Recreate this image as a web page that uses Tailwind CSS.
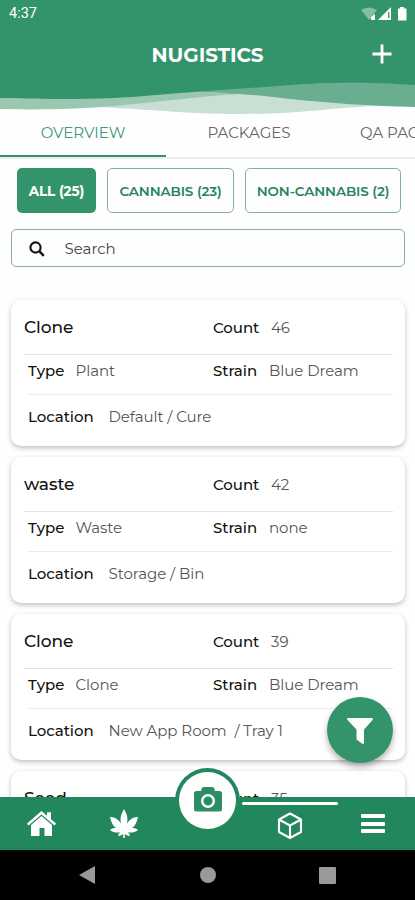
<!DOCTYPE html>
<html lang="en">
<head>
<meta charset="utf-8">
<meta name="viewport" content="width=device-width, initial-scale=1">
<title>Nugistics</title>
<script src="https://cdn.jsdelivr.net/npm/@tailwindcss/browser@4"></script>
</head>
<body class="bg-white">
<div class="relative flex h-[900px] w-[415px] flex-col overflow-hidden bg-[#fefefe] font-['Montserrat','Inter',sans-serif] text-[#111]">

  <header class="relative h-[116px] shrink-0">
    <svg class="absolute inset-0" width="415" height="116" viewBox="0 0 415 116">
      <path fill="#c9dfd4" d="M0 90H415V105C370 105 345 108 310 111C270 115 210 115 165 111C135 109 112 108 102 107C70 108 40 110 0 109Z"/>
      <path fill="#9bc6b0" d="M0 90L240 86V94C190 97 150 103 102 107C70 109 40 110 0 109Z"/>
      <path fill="#69ae90" d="M200 92L260 80H415V107C370 106 330 103 290 99C265 96 245 94 230 93.500C218 92 210 92 200 92Z"/>
      <path fill="#33946c" d="M0 0H415V85C360 81.500 325 82.500 290 85C240 89 190 92 150 95.500C110 99 80 99 60 99C35 99 20 98 0 98Z"/>
    </svg>
    <div class="relative flex h-7 items-center justify-between pr-[7px] pl-[9px] text-white">
      <span class="font-[Roboto] text-[14.5px] leading-none">4:37</span>
      <div class="flex items-start">
        <svg width="50" height="16" viewBox="0 0 50 16">
          <path fill="#83bda4" d="M3 4Q11-1 19 4L11 14Z"/>
          <path fill="#fff" d="M13 11L17 8V14H13Z"/>
          <path fill="#fff" d="M20 14L33 1V14Z"/>
          <path stroke="#33946c" stroke-width="1.3" d="M30.7 6V12"/>
          <path fill="#fff" d="M40 2.5H42V1H46V2.5H48.5V14.5H40Z"/>
        </svg>
      </div>
    </div>
    <div class="relative grid h-[53px] grid-cols-[60px_1fr_60px] items-center text-white">
      <h1 class="col-start-2 text-center text-[20px] font-bold tracking-[-0.05px] whitespace-nowrap">NUGISTICS</h1>
      <svg class="-mt-px ml-[17px]" width="20" height="20" viewBox="0 0 20 20" stroke="#fff" stroke-width="2.8"><path d="M.5 10H19.5M10 .5V19.5"/></svg>
    </div>
  </header>

  <nav class="flex h-[43px] w-[498px] shrink-0 border-b-2 border-[#ececec] text-[15px] text-[#666]">
    <div class="flex w-[166px] items-center justify-center border-b-2 border-[#33946c] pb-1 text-[#43977a]">OVERVIEW</div>
    <div class="flex w-[166px] items-center justify-center pb-1.5">PACKAGES</div>
    <div class="flex w-[166px] items-center pb-1.5 pl-[28px]">QA PACKAGES</div>
  </nav>

  <div class="mt-[9px] ml-[17px] flex h-[45px] shrink-0 gap-[11px] text-[13.5px] font-semibold whitespace-nowrap text-[#25845c]">
    <button class="w-[79px] rounded-[5px] bg-[#33946c] pt-0.5 font-bold tracking-[-0.1px] text-white">ALL (25)</button>
    <button class="w-[127px] rounded-[5px] border border-[#83b39f] pt-0.5 tracking-[-0.1px]">CANNABIS (23)</button>
    <button class="w-[156px] rounded-[5px] border border-[#83b39f] pt-0.5 tracking-[-0.1px]">NON-CANNABIS (2)</button>
  </div>

  <div class="mt-4 ml-[11px] flex h-[38px] w-[394px] shrink-0 items-center rounded-[5px] border border-[#83b39f] pl-[17px]">
    <svg class="mt-0.5" width="16" height="16" viewBox="0 0 16 16" fill="none" stroke="#111" stroke-width="2.1"><circle cx="6.5" cy="6.5" r="5.1"/><path stroke-width="2.4" d="M10.2 10.2L14.8 14.8"/></svg>
    <span class="mt-0.5 ml-[19.5px] text-[15px] text-[#444]">Search</span>
  </div>

  <main id="list" class="mt-[33px] flex min-h-0 flex-1 flex-col gap-[11px] pl-[11px]"></main>

  <footer class="absolute inset-x-0 bottom-0">
    <button class="absolute -top-[100px] left-[327px] flex size-[66px] items-center justify-center rounded-full bg-[#33946c] shadow-[0_4px_6px_rgba(0,0,0,0.3)]">
      <svg class="mt-0.5" width="28" height="28" viewBox="0 0 28 28" fill="#fff"><path d="M1.5 1H26.5Q27.5 1.5 26.5 3L18 12.5V26Q17.5 27.5 16 26.5L10.5 22.5V12.5L1.500 3Q.5 1.500 1.500 1Z"/></svg>
    </button>
    <div class="absolute -top-[29px] left-[175px] size-[65px] rounded-full bg-[#23875e]"></div>
    <div class="relative flex h-[53px] bg-[#23875e]">
      <div class="flex w-[82px] justify-center pt-[14px]">
        <svg width="29" height="26" viewBox="0 0 29 26" fill="#fff"><path d="M14.500 0L20 4.700V1.200H24V8.200L29 12.500L27.500 14.500L14.500 3.400L1.500 14.500L0 12.500Z"/><path d="M14.500 5L25 14V25H17.500V17H12.500V25H4V14Z"/></svg>
      </div>
      <div class="flex w-[83px] justify-center pt-[12px]">
        <svg width="30" height="30" viewBox="0 0 30 30" fill="#fff"><path d="M15 0C18.500 6 19 10 18 14.500C21 10 24.500 8 29 8C28 13 26 17 23 19C26 18.800 27.500 19.500 29 21C25 24 21 24 18.500 23C20 24 20.500 25.500 21 27C18.500 27 16.500 26 15.800 24.500V29H14.200V24.500C13.500 26 11.500 27 9 27C9.500 25.500 10 24 11.500 23C9 24 5 24 1 21C2.500 19.500 4 18.800 7 19C4 17 2 13 1 8C5.500 8 9 10 12 14.500C11 10 11.500 6 15 0Z"/></svg>
      </div>
      <div class="w-[83px]"></div>
      <div class="flex w-[83px] justify-center pt-[15px]">
        <svg width="26" height="28" viewBox="0 0 26 28" fill="none" stroke="#fff" stroke-width="2.1" stroke-linejoin="round"><path d="M13 1.500L24 7.500V20L13 26L2 20V7.500ZM2 7.500L13 13.500L24 7.500M13 13.500V26"/></svg>
      </div>
      <div class="flex w-[83px] flex-col items-center gap-[3.500px] pt-[17px]">
        <i class="h-1 w-6 rounded-[1px] bg-white"></i><i class="h-1 w-6 rounded-[1px] bg-white"></i><i class="h-1 w-6 rounded-[1px] bg-white"></i>
      </div>
      <i class="absolute top-[5px] left-[242px] h-[3px] w-[96px] rounded-full bg-white"></i>
      <div class="absolute -top-[25px] left-[179px] flex size-[57px] items-center justify-center rounded-full bg-white">
        <svg class="-mt-0.5" width="28" height="25" viewBox="0 0 28 25"><path fill="#2b8d65" d="M9.500 0H18.500Q20 0 21 4H25.500Q28 4 28 6.500V22Q28 24.500 25.500 24.500H2.500Q0 24.500 0 22V6.500Q0 4 2.500 4H7Q8 0 9.500 0Z"/><circle cx="14" cy="14" r="5.800" fill="none" stroke="#fff" stroke-width="2.400"/></svg>
      </div>
    </div>
    <div class="flex h-[50px] items-center bg-black">
      <svg class="ml-[79px]" width="16" height="18" viewBox="0 0 16 18" fill="#999"><path d="M0 9L16 0V18Z"/></svg>
      <i class="ml-[105px] size-4 rounded-full bg-[#999]"></i>
      <i class="ml-[103px] size-[17px] rounded-[1px] bg-[#999]"></i>
    </div>
  </footer>
</div>
<script>
const items = [
  ['Clone', '46', 'Plant', 'Blue Dream', 'Default / Cure'],
  ['waste', '42', 'Waste', 'none', 'Storage / Bin'],
  ['Clone', '39', 'Clone', 'Blue Dream', 'New App Room&nbsp; / Tray 1'],
  ['Seed', '35', 'Seed', 'none', 'Default / Cure'],
];
document.getElementById('list').innerHTML = items.map(([name, count, type, strain, place]) => `
  <section class="flex h-[146px] w-[394px] shrink-0 flex-col rounded-[10px] bg-white pr-3 pl-[13px] text-[15px] tracking-[-0.05px] text-[#555] shadow-[0_2px_5px_rgba(0,0,0,0.25)]">
    <div class="flex h-[55px] shrink-0 items-center border-b border-[#e2e2e2] pt-0.5">
      <b class="w-[189px] text-[17px] font-medium text-[#111]">${name}</b>
      <b class="w-[58px] font-medium text-[#111]">Count</b><span>${count}</span>
    </div>
    <div class="ml-1 flex h-[40px] shrink-0 items-center border-b border-[#ececec] pb-[7px]">
      <b class="w-[47.5px] font-medium text-[#111]">Type</b><span class="w-[137.5px]">${type}</span>
      <b class="w-[56px] font-medium text-[#111]">Strain</b><span class="whitespace-nowrap">${strain}</span>
    </div>
    <div class="ml-1 flex h-[44px] items-center">
      <b class="w-[80.5px] font-medium text-[#111]">Location</b><span>${place}</span>
    </div>
  </section>`).join('');
</script>
</body>
</html>
